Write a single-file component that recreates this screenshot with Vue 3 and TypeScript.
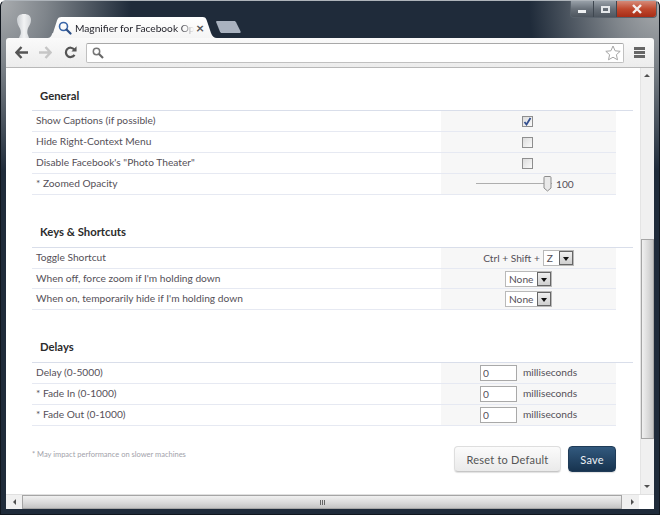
<script setup lang="ts">
type Row = {
  label: string
  kind: 'check' | 'slider' | 'shortcut' | 'select' | 'number'
  checked?: boolean
}

type Section = {
  title: string
  rows: Row[]
}

const sections: Section[] = [
  {
    title: 'General',
    rows: [
      { label: 'Show Captions (if possible)', kind: 'check', checked: true },
      { label: 'Hide Right-Context Menu', kind: 'check' },
      { label: 'Disable Facebook\'s "Photo Theater"', kind: 'check' },
      { label: '* Zoomed Opacity', kind: 'slider' },
    ],
  },
  {
    title: 'Keys & Shortcuts',
    rows: [
      { label: 'Toggle Shortcut', kind: 'shortcut' },
      { label: "When off, force zoom if I'm holding down", kind: 'select' },
      { label: "When on, temporarily hide if I'm holding down", kind: 'select' },
    ],
  },
  {
    title: 'Delays',
    rows: [
      { label: 'Delay (0-5000)', kind: 'number' },
      { label: '* Fade In (0-1000)', kind: 'number' },
      { label: '* Fade Out (0-1000)', kind: 'number' },
    ],
  },
]
</script>

<template>
  <div class="window">
    <header class="titlebar">
      <svg class="avatar" width="16" height="24" viewBox="0 0 16 24">
        <defs>
          <linearGradient id="avatarFill" x1="0" y1="0" x2="1" y2="0">
            <stop offset="0" stop-color="#c9cdd1" />
            <stop offset="0.5" stop-color="#f2f3f4" />
            <stop offset="1" stop-color="#d4d7da" />
          </linearGradient>
        </defs>
        <path d="M8 0C3.500 0 1 2 1 6c0 3 1.500 6 3 8.500 1 2.500 1 4.500.5 6-.5 1-1 2-1.500 3.500h10c-.5-2-1-3-1.500-4-.5-2.500 0-4.500.5-6C13.500 11.500 15 9 15 6c0-4-2.500-6-7-6z" fill="url(#avatarFill)" />
      </svg>
      <div class="tab">
        <svg class="tab-shape" width="170" height="21" viewBox="0 0 170 21">
          <defs>
            <linearGradient id="tabFill" x1="0" y1="0" x2="0" y2="1">
              <stop offset="0" stop-color="#ffffff" />
              <stop offset="1" stop-color="#f5f5f5" />
            </linearGradient>
          </defs>
          <path d="M0 21c3 0 4-1 5.500-5L6 16l4-12.500C10.800 1 12 0 14.500 0h141c2.500 0 3.500 1 4.300 3.500L164 16c1.300 3.500 3 5 6 5z" fill="url(#tabFill)" />
        </svg>
        <svg class="tab-icon" width="14" height="14" viewBox="0 0 14 14">
          <circle cx="5.500" cy="5.500" r="4" fill="none" stroke="#3a66a8" stroke-width="1.600" />
          <path d="M8.500 8.500l4 4" stroke="#2c4f86" stroke-width="2.200" stroke-linecap="round" />
        </svg>
        <span class="tab-title">Magnifier for Facebook Op</span>
        <span class="tab-close">×</span>
      </div>
      <svg class="new-tab" width="26" height="12" viewBox="0 0 26 12">
        <path d="M1 0h17c1 0 1.500.4 2 1.300l4.500 9c.3.8 0 1.700-1 1.700H6c-1 0-1.500-.4-2-1.300L.2 1.300C-.1.500.2 0 1 0z" fill="#a9b2bf" />
      </svg>
      <div class="controls">
        <span class="ctl ctl-min"><i></i></span>
        <span class="ctl ctl-max"><i></i></span>
        <span class="ctl ctl-close">
          <svg width="12" height="10" viewBox="0 0 12 10">
            <path d="M2 1l8 8M10 1L2 9" stroke="#f4efee" stroke-width="2.400" />
          </svg>
        </span>
      </div>
    </header>

    <nav class="toolbar">
      <svg class="nav-icon" width="13" height="13" viewBox="0 0 13 13">
        <path d="M6.500 1L1.500 6.500l5 5.500M2 6.500h11" fill="none" stroke="#555" stroke-width="2.400" />
      </svg>
      <svg class="nav-icon nav-forward" width="13" height="13" viewBox="0 0 13 13">
        <path d="M6.500 1l5 5.500-5 5.500M11 6.500H0" fill="none" stroke="#c6c6c6" stroke-width="2.400" />
      </svg>
      <svg class="nav-icon nav-reload" width="13" height="13" viewBox="0 0 14 14">
        <path d="M11.300 9.500A5 5 0 1 1 11 3.800" fill="none" stroke="#555" stroke-width="2.400" />
        <path d="M8 5.800h5.500V.3z" fill="#555" />
      </svg>
      <div class="omnibox">
        <svg width="12" height="12" viewBox="0 0 12 12">
          <circle cx="4.500" cy="4.500" r="3.200" fill="none" stroke="#777" stroke-width="1.500" />
          <path d="M7 7l4 4" stroke="#666" stroke-width="2.200" />
        </svg>
        <svg class="star" width="16" height="16" viewBox="0 0 16 16">
          <path d="M8 1l2.100 4.800 5.100.5-3.800 3.400 1.100 5.100L8 12.200l-4.500 2.600 1.100-5.100L.8 6.300l5.100-.5z" fill="#fff" stroke="#a5a5a5" />
        </svg>
      </div>
      <div class="menu"><i></i><i></i><i></i></div>
    </nav>

    <div class="viewport">
      <main class="page">
        <section v-for="section in sections" :key="section.title" class="section">
          <h2>{{ section.title }}</h2>
          <div v-for="row in section.rows" :key="row.label" class="row">
            <div class="label">{{ row.label }}</div>
            <div class="value">
              <template v-if="row.kind === 'check'">
                <span class="check">
                  <svg v-if="row.checked" width="9" height="9" viewBox="0 0 9 9">
                    <path d="M1.500 5l2 2.500L7.500 1" fill="none" stroke="#34508f" stroke-width="1.800" />
                  </svg>
                </span>
              </template>
              <template v-else-if="row.kind === 'slider'">
                <span class="slider"><span class="track"></span>
                  <svg class="thumb" width="9" height="16" viewBox="0 0 9 16">
                    <path d="M1 1.500C1 .9 1.400.5 2 .5h5c.6 0 1 .4 1 1V12l-3.500 3L1 12z" fill="#e9e9e9" stroke="#8d8d8d" />
                  </svg>
                </span>
                <span class="slider-val">100</span>
              </template>
              <template v-else-if="row.kind === 'shortcut'">
                <span class="keys">Ctrl + Shift +</span>
                <span class="select select-z"><span>Z</span><b></b></span>
              </template>
              <template v-else-if="row.kind === 'select'">
                <span class="select"><span>None</span><b></b></span>
              </template>
              <template v-else>
                <input class="num" type="text" value="0" />
                <span class="unit">milliseconds</span>
              </template>
            </div>
          </div>
        </section>
        <footer class="foot">
          <p class="note">* May impact performance on slower machines</p>
          <button class="btn" type="button">Reset to Default</button>
          <button class="btn btn-save" type="button">Save</button>
        </footer>
      </main>
      <aside class="vscroll">
        <span class="arrow arrow-up"></span>
        <div class="vthumb"></div>
        <span class="arrow arrow-down"></span>
      </aside>
    </div>

    <div class="hscroll">
      <span class="arrow arrow-left"></span>
      <div class="hthumb"><span class="grip"></span></div>
      <span class="arrow arrow-right"></span>
      <span class="corner"></span>
    </div>
  </div>
</template>

<style scoped>
.window {
  box-sizing: border-box;
  width: 660px;
  height: 515px;
  padding: 0 5px 5px;
  display: flex;
  flex-direction: column;
  overflow: hidden;
  border: 1px solid #10161e;
  border-top-color: #aeb4ba;
  border-radius: 6px 6px 0 0;
  font-family: Lato, "Open Sans", sans-serif;
  background:
    radial-gradient(ellipse 130px 170px at 0 0, #a9acaf 0, #7f858b 35%, rgba(31, 43, 58, 0) 100%),
    radial-gradient(ellipse 130px 170px at 100% 0, #a9acaf 0, #7f858b 35%, rgba(31, 43, 58, 0) 100%),
    #1f2b3a;
}

.titlebar {
  height: 37px;
  flex: none;
  display: flex;
  align-items: flex-end;
}

.avatar {
  margin: 0 0 0 10px;
}

.tab {
  position: relative;
  width: 170px;
  height: 21px;
  margin-left: 15px;
  display: flex;
  align-items: center;
  gap: 3px;
  padding-left: 11px;
  box-sizing: border-box;
}

.tab-shape {
  position: absolute;
  left: 0;
  top: 0;
}

.tab-icon,
.tab-title,
.tab-close {
  position: relative;
}

.tab-title {
  white-space: nowrap;
  font-size: 10.2px;
  color: #26262e;
  -webkit-mask-image: linear-gradient(90deg, #000 88%, transparent);
  mask-image: linear-gradient(90deg, #000 88%, transparent);
}

.tab-close {
  position: absolute;
  left: 149px;
  font-size: 14px;
  font-weight: 700;
  line-height: 1;
  color: #555;
}

.new-tab {
  margin: 0 0 5px -1px;
}

.controls {
  margin-left: auto;
  margin-right: -3px;
  align-self: flex-start;
  display: flex;
  height: 16px;
  border: 1px solid #59626c;
  border-top: none;
  border-radius: 0 0 4px 4px;
  overflow: hidden;
}

.ctl {
  display: flex;
  align-items: center;
  justify-content: center;
  height: 100%;
  box-sizing: border-box;
}

.ctl-min,
.ctl-max {
  width: 23px;
  background: linear-gradient(#98a0a8, #687079 50%, #4e565f);
  border-right: 1px solid #3f4750;
}

.ctl-min i {
  width: 8px;
  height: 3px;
  margin-top: 4px;
  background: #eef0f2;
}

.ctl-max i {
  box-sizing: border-box;
  width: 9px;
  height: 7px;
  border: 2px solid #e4e7ea;
}

.ctl-close {
  width: 39px;
  background: linear-gradient(#d58a78, #c0492e 50%, #a72d17);
}

.toolbar {
  height: 30px;
  flex: none;
  display: flex;
  align-items: center;
  padding: 0 9px;
  box-sizing: border-box;
  border-radius: 3px 3px 0 0;
  border-bottom: 1px solid #b8b8b8;
  background: linear-gradient(#fafafa, #ececec);
}

.nav-icon {
  flex: none;
}

.nav-forward {
  margin-left: 11px;
}

.nav-reload {
  margin-left: 12px;
}

.omnibox {
  flex: 1;
  height: 20px;
  margin-left: 9px;
  box-sizing: border-box;
  display: flex;
  align-items: center;
  justify-content: space-between;
  padding: 0 2px 0 5px;
  background: #fff;
  border: 1px solid #c0c0c0;
  border-top-color: #a8a8a8;
  border-radius: 2px;
}

.menu {
  width: 11px;
  display: grid;
  gap: 1px;
  margin-left: 10px;
}

.menu i {
  height: 3px;
  background: #666;
}

.viewport {
  flex: 1;
  min-height: 0;
  display: flex;
  background: #fff;
}

.page {
  flex: 1;
  box-sizing: border-box;
  padding: 16px 0 0 26px;
  background: #fff;
}

.section {
  width: 601px;
  margin-bottom: 26px;
}

.section:nth-child(2) .row:nth-child(3) {
  height: 20px;
}

h2 {
  margin: 0;
  height: 27px;
  padding: 4px 0 0 8px;
  box-sizing: border-box;
  font-size: 11.3px;
  font-weight: 700;
  line-height: 16px;
  color: #2b2b2b;
  border-bottom: 1px solid #d9deea;
}

.section + .section h2 {
  padding-top: 3px;
}

.row {
  width: 584px;
  height: 21px;
  display: grid;
  grid-template-columns: 409px 175px;
  box-sizing: border-box;
  border-bottom: 1px solid #e6e9f2;
  font-size: 10.2px;
  color: #555058;
}

.label {
  padding-left: 4px;
  line-height: 19px;
  white-space: nowrap;
}

.value {
  background: #f7f7f7;
  display: flex;
  align-items: center;
  justify-content: center;
  gap: 3px;
}

.check {
  width: 11px;
  height: 11px;
  margin-right: 2px;
  box-sizing: border-box;
  display: flex;
  align-items: center;
  justify-content: center;
  border: 1px solid #8e8e8e;
  background: linear-gradient(135deg, #dcdcdc, #fafafa);
}

.slider {
  position: relative;
  width: 76px;
  height: 16px;
}

.track {
  position: absolute;
  left: 0;
  right: 0;
  top: 7px;
  height: 1px;
  background: #aeaeae;
}

.thumb {
  position: absolute;
  right: 0;
  top: 0;
}

.slider-val {
  margin-left: 1px;
  margin-right: 9px;
  width: 16px;
}

.select {
  box-sizing: border-box;
  width: 47px;
  height: 16px;
  display: flex;
  align-items: stretch;
  border: 1px solid #b9b9b9;
  background: #fff;
  line-height: 14px;
}

.select span {
  flex: 1;
  padding-left: 3px;
}

.select b {
  position: relative;
  width: 14px;
  box-sizing: border-box;
  border: 1px solid #666;
  background: linear-gradient(#f0f0f0, #cfcfcf);
}

.select b::after {
  content: "";
  position: absolute;
  left: 3px;
  top: 5px;
  border: 3px solid transparent;
  border-top: 4px solid #111;
  border-bottom: none;
}

.select-z {
  width: 31px;
}

.num {
  width: 37px;
  height: 16px;
  box-sizing: border-box;
  padding: 1px 2px;
  border: 1px solid #a9a9a9;
  font: inherit;
  color: #555058;
  background: #fff;
}

.unit {
  margin: -2px 0 0 3px;
}

.foot {
  width: 584px;
  display: flex;
  align-items: center;
  margin-top: -6px;
}

.note {
  flex: 1;
  margin: 0 0 10px;
  font-size: 7.5px;
  color: #a2a2aa;
}

.btn {
  height: 26px;
  width: 107px;
  padding: 0;
  border: 1px solid #dedede;
  border-bottom-color: #c6c6c6;
  border-radius: 4px;
  font-family: inherit;
  font-size: 11px;
  letter-spacing: 0.2px;
  color: #555;
  background: linear-gradient(#fbfbfb, #eaeaea);
  box-shadow: 0 1px 1px rgba(0, 0, 0, 0.12);
}

.btn-save {
  width: 48px;
  margin-left: 7px;
  border-color: #1f3b57;
  color: #eef2f6;
  background: linear-gradient(#32597e, #17334f);
}

.vscroll {
  flex: none;
  width: 14px;
  position: relative;
  display: flex;
  flex-direction: column;
  background: #f0f0f0;
  border-left: 1px solid #e4e4e4;
  box-sizing: border-box;
}

.vthumb {
  position: absolute;
  left: 0;
  right: 0;
  top: 171px;
  height: 200px;
  box-sizing: border-box;
  border: 1px solid #a5a5a5;
  background: linear-gradient(90deg, #f0f0f0, #d8d8d8 60%, #c4c4c4);
}

.arrow {
  position: absolute;
  width: 0;
  height: 0;
  border: 3px solid transparent;
}

.arrow-up {
  left: 3px;
  top: 6px;
  border-bottom: 3px solid #505050;
  border-top: none;
}

.arrow-down {
  left: 3px;
  bottom: 6px;
  border-top: 3px solid #505050;
  border-bottom: none;
}

.hscroll {
  position: relative;
  flex: none;
  height: 15px;
  background: #f0f0f0;
  border-top: 1px solid #e0e0e0;
  box-sizing: border-box;
}

.hthumb {
  position: absolute;
  left: 16px;
  right: 32px;
  top: 0;
  height: 100%;
  box-sizing: border-box;
  display: flex;
  align-items: center;
  justify-content: center;
  border: 1px solid #a5a5a5;
  background: linear-gradient(#f0f0f0, #d8d8d8 60%, #c4c4c4);
}

.grip {
  width: 5px;
  height: 5px;
  background: repeating-linear-gradient(90deg, #666 0 1px, transparent 1px 2px);
}

.arrow-left {
  left: 7px;
  top: 4px;
  border-right: 3px solid #505050;
  border-left: none;
}

.arrow-right {
  right: 20px;
  top: 4px;
  border-left: 3px solid #505050;
  border-right: none;
}

.corner {
  position: absolute;
  right: 0;
  top: 0;
  width: 15px;
  height: 100%;
  background: #fff;
}
</style>
